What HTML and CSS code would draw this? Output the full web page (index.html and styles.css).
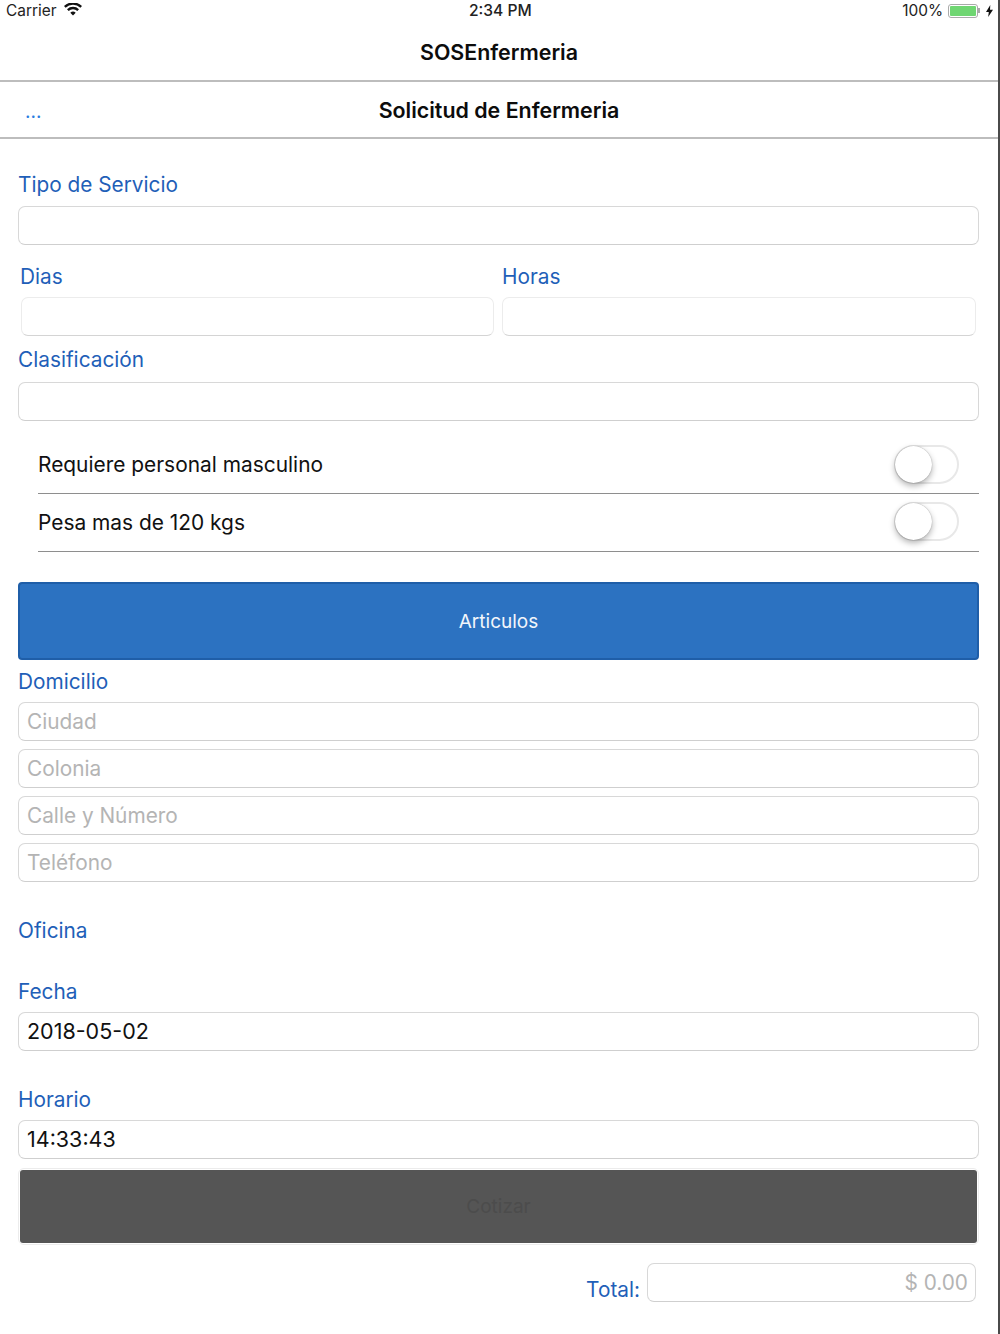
FILE: index.html
```html
<!DOCTYPE html>
<html lang="es">
<head>
<meta charset="utf-8">
<title>SOSEnfermeria</title>
<link rel="stylesheet" href="styles.css">
</head>
<body>
<div class="screen">
  <header class="status">
    <div class="status-left">
      <span>Carrier</span>
      <svg class="wifi" width="18" height="13" viewBox="0 0 18 13"><path d="M9 12.600 6.300 9.700a4 4 0 0 1 5.400 0zM4.700 8 3 6.200a8.600 8.600 0 0 1 12 0L13.300 8a6.200 6.200 0 0 0-8.600 0zM1.600 4.800 0 3a13 13 0 0 1 18 0l-1.600 1.800a10.700 10.700 0 0 0-14.800 0z" fill="#111"/></svg>
    </div>
    <div class="status-time">2:34 PM</div>
    <div class="status-right">
      <span>100%</span>
      <span class="battery"><span class="battery-fill"></span></span>
      <span class="battery-cap"></span>
      <svg class="bolt" width="7" height="12" viewBox="0 0 7 12"><path d="M4.300 0 0 6.900h2.800L2.200 12 7 4.800H4z" fill="#111"/></svg>
    </div>
  </header>
  <div class="nav nav-main">SOSEnfermeria</div>
  <div class="nav nav-sub"><span class="more">...</span>Solicitud de Enfermeria</div>
  <main class="form">
    <div class="label l-tipo">Tipo de Servicio</div>
    <div class="field"></div>
    <div class="pair">
      <div class="col">
        <div class="label l-pair l-dias">Dias</div>
        <div class="field field-soft"></div>
      </div>
      <div class="col">
        <div class="label l-pair">Horas</div>
        <div class="field field-soft"></div>
      </div>
    </div>
    <div class="label l-clas">Clasificación</div>
    <div class="field"></div>
    <div class="switches">
      <div class="switch-row"><span>Requiere personal masculino</span><span class="switch"><span class="knob"></span></span></div>
      <div class="switch-row"><span>Pesa mas de 120 kgs</span><span class="switch"><span class="knob"></span></span></div>
    </div>
    <button class="btn-articulos" type="button">Articulos</button>
    <div class="label l-dom">Domicilio</div>
    <div class="stack">
      <div class="field ph">Ciudad</div>
      <div class="field ph">Colonia</div>
      <div class="field ph">Calle y Número</div>
      <div class="field ph">Teléfono</div>
    </div>
    <div class="label l-ofi">Oficina</div>
    <div class="label l-fecha">Fecha</div>
    <div class="field val">2018-05-02</div>
    <div class="label l-hor">Horario</div>
    <div class="field val">14:33:43</div>
    <div class="cotizar-wrap"><button class="btn-cotizar" type="button">Cotizar</button></div>
    <div class="total-row">
      <span class="label total-label">Total:</span>
      <div class="field ph total-field">$ 0.00</div>
    </div>
  </main>
</div>
</body>
</html>
```
FILE: styles.css
```css
* { box-sizing: border-box; }
html, body { margin: 0; padding: 0; background: #fff; }
body { font-family: Inter, "Liberation Sans", sans-serif; color: #111; }
.screen { width: 1000px; height: 1334px; border-right: 2px solid #4a4a4a; overflow: hidden; background: #fff; }

.status { height: 22px; display: flex; align-items: center; justify-content: space-between; position: relative; padding: 0 5px 1px 6px; font-size: 15.400px; color: #222; }
.status-left { display: flex; align-items: center; gap: 8px; }
.wifi { margin-top: -3px; }
.status-time { position: absolute; left: 469px; top: 1px; font-weight: 500; font-size: 15.600px; }
.status-right { display: flex; align-items: center; }
.battery { width: 30px; height: 14px; border: 1px solid #aaa; border-radius: 3px; padding: 1px; margin-left: 5px; display: flex; }
.battery-fill { flex: 1; background: #6fd672; border-radius: 1px; }
.battery-cap { width: 2px; height: 5px; background: #aaa; margin-right: 6px; }
.bolt { display: block; }

.nav { display: flex; align-items: center; justify-content: center; position: relative; font-weight: 600; color: #0c0c0c; border-bottom: 2px solid #bdbdbd; font-size: 21.400px; }
.nav-main { height: 60px; padding-top: 1px; }
.nav-sub { height: 57px; }
.more { position: absolute; left: 25px; top: 18px; color: #2a7de1; font-weight: 400; font-size: 19px; }

.form { padding: 0 19px 0 18px; }
.label { color: #1f5fb8; font-size: 20.800px; line-height: 26px; }
.field { height: 39px; border: 1px solid #d8d8d8; border-bottom-color: #cfcfcf; border-radius: 7px; background: #fff; font-size: 21.500px; line-height: 36px; padding: 0 8px; }
.field-soft { border-color: #ececec; border-bottom-color: #d4d4d4; }
.ph { color: #b4b4b4; font-size: 20.800px; line-height: 38px; }
.val { color: #111; }

.l-tipo { margin-top: 33px; margin-bottom: 8px; }
.pair { display: flex; gap: 8px; padding: 0 3px; margin-top: 19px; }
.col { flex: 1; min-width: 0; }
.col:first-child { flex: 0 0 473px; }
.l-pair { margin-bottom: 7px; }
.l-dias { margin-left: -1px; }
.l-clas { margin-top: 11px; margin-bottom: 9px; }

.switches { margin-top: 16px; margin-left: 20px; }
.switch-row { height: 58px; display: flex; align-items: center; justify-content: space-between; border-bottom: 1px solid #8e8e8e; font-size: 20.900px; padding-right: 20px; color: #111; padding-bottom: 1px; }
.switch-row:first-child { height: 57px; }
.switch { width: 65px; height: 39px; border: 2px solid #e8e8e8; border-radius: 20px; position: relative; background: #fff; display: block; margin-top: -1px; }
.knob { position: absolute; left: -1px; top: -1px; width: 37px; height: 37px; border-radius: 50%; background: #fff; box-shadow: 0 3px 6px rgba(0,0,0,.3), 0 0 1px rgba(0,0,0,.4); }

.btn-articulos { display: block; width: 100%; height: 78px; margin-top: 30px; background: #2c72c1; border: 2px solid #1f5ea8; border-radius: 4px; color: #f2f6fb; font: 400 19px Inter, "Liberation Sans", sans-serif; }
.l-dom { margin-top: 9px; margin-bottom: 7px; }
.stack { display: flex; flex-direction: column; gap: 8px; }
.l-ofi { margin-top: 36px; }
.l-fecha { margin-top: 35px; margin-bottom: 7px; }
.l-hor { margin-top: 36px; margin-bottom: 7px; }

.cotizar-wrap { margin-top: 9px; height: 77px; border: 1px solid #ececec; border-radius: 6px; padding: 1px; }
.btn-cotizar { display: block; width: 100%; height: 73px; background: #555; border: 0; border-radius: 3px; color: #4c4c4c; font: 400 19px Inter, "Liberation Sans", sans-serif; }

.total-row { display: flex; align-items: flex-end; justify-content: flex-end; gap: 7px; margin-top: 18px; padding-right: 3px; }
.total-label { position: relative; top: 1px; }
.total-field { width: 329px; text-align: right; padding-right: 7px; }
```
